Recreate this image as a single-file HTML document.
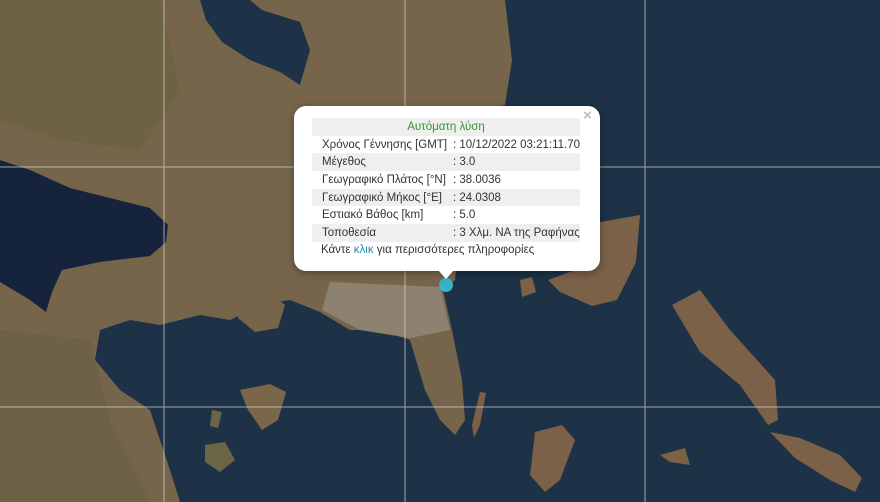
<!DOCTYPE html>
<html><head><meta charset="utf-8"><style>
html,body{margin:0;padding:0;width:880px;height:502px;overflow:hidden;background:#1d3246;font-family:"Liberation Sans",sans-serif}
svg{position:absolute;left:0;top:0}
.pop{position:absolute;left:294px;top:106px;width:306px;height:165px;background:#fff;border-radius:12px;box-shadow:0 2px 8px rgba(0,0,0,.35)}
.tip{position:absolute;left:438px;top:270px;width:0;height:0;border-left:8px solid transparent;border-right:8px solid transparent;border-top:9px solid #fff}
.x{position:absolute;left:583px;top:107px;color:#bbb;font-size:15px;font-weight:bold}
table{position:absolute;left:312px;top:118px;width:268px;border-collapse:collapse;font-size:11.5px;color:#333}
td{height:17.7px;padding:0 0 0 10px;white-space:nowrap}
td:first-child{width:132px}
tr.g td{background:#efefef}
td.v{padding-left:0}
.link{position:absolute;left:321px;top:244px;font-size:11.5px;color:#333}
.link span{color:#2a8fb8}
</style></head><body>
<svg width="880" height="502" viewBox="0 0 880 502">
<rect width="880" height="502" fill="#1d3246"/>
<path d="M0,0 L505,0 L512,60 L505,105 L472,112 L462,200 L455,280 L443,290 L452,330 L462,380 L465,420 L455,435 L440,420 L425,390 L410,340 L380,330 L350,330 L320,312 L290,300 L260,305 L230,320 L200,315 L160,325 L130,320 L100,330 L95,360 L120,390 L150,410 L160,440 L170,470 L180,502 L0,502 Z" fill="#76654a"/>
<path d="M0,0 L160,0 L180,90 L140,150 L60,140 L0,120 Z" fill="#67623f" opacity=".6"/>
<path d="M300,140 L420,150 L440,230 L380,260 L300,240 Z" fill="#6b6544" opacity=".5"/>
<path d="M330,282 L440,287 L450,330 L410,338 L360,330 L322,310 Z" fill="#8d8270"/>
<path d="M0,330 L90,340 L110,420 L150,502 L0,502 Z" fill="#676143" opacity=".6"/>
<path d="M200,0 L250,0 L262,10 L300,22 L310,50 L300,85 L280,72 L250,60 L222,42 L206,20 Z" fill="#1d3246"/>
<path d="M0,160 L30,170 L70,188 L110,198 L150,208 L168,225 L166,242 L150,256 L100,262 L62,270 L52,292 L46,312 L30,300 L0,282 Z" fill="#15243c"/>
<path d="M240,300 L268,292 L285,305 L278,328 L255,332 L238,318 Z" fill="#76654a"/>
<path d="M240,390 L270,384 L286,392 L278,420 L262,430 L248,410 Z" fill="#7a674a"/>
<path d="M205,445 L225,442 L235,460 L220,472 L205,462 Z" fill="#6a6545"/>
<path d="M212,410 L222,412 L218,428 L210,426 Z" fill="#6a6545"/>
<path d="M600,222 L640,215 L636,262 L617,300 L592,306 L560,292 L548,280 L575,270 L595,255 Z" fill="#7a6148"/>
<path d="M520,280 L532,277 L536,292 L522,297 Z" fill="#7a6148"/>
<path d="M672,305 L700,290 L730,330 L775,380 L778,420 L768,425 L740,385 L700,352 Z" fill="#7a6148"/>
<path d="M770,432 L800,438 L840,455 L862,478 L855,492 L830,480 L795,458 Z" fill="#7a6148"/>
<path d="M660,455 L685,448 L690,465 L670,462 Z" fill="#7a6148"/>
<path d="M480,392 L486,393 L480,425 L474,438 L472,425 Z" fill="#7a6148"/>
<path d="M535,432 L562,425 L575,440 L560,480 L545,492 L530,475 Z" fill="#7a6148"/>
<g stroke="#d8d8d8" stroke-width="1" opacity=".7">
<line x1="164" y1="0" x2="164" y2="502"/><line x1="405" y1="0" x2="405" y2="502"/><line x1="645" y1="0" x2="645" y2="502"/>
<line x1="0" y1="167" x2="880" y2="167"/><line x1="0" y1="407" x2="880" y2="407"/>
</g>
<circle cx="446" cy="285" r="7" fill="#35b3c8"/>
</svg>
<div class="pop"></div>
<div class="tip"></div>
<div class="x">×</div>
<table>
<tr class="g"><td colspan="2" style="text-align:center;color:#2e9a2e;padding:0">Αυτόματη λύση</td></tr>
<tr><td>Χρόνος Γέννησης [GMT]</td><td class="v">: 10/12/2022 03:21:11.70</td></tr>
<tr class="g"><td>Μέγεθος</td><td class="v">: 3.0</td></tr>
<tr><td>Γεωγραφικό Πλάτος [°N]</td><td class="v">: 38.0036</td></tr>
<tr class="g"><td>Γεωγραφικό Μήκος [°E]</td><td class="v">: 24.0308</td></tr>
<tr><td>Εστιακό Βάθος [km]</td><td class="v">: 5.0</td></tr>
<tr class="g"><td>Τοποθεσία</td><td class="v">: 3 Χλμ. ΝΑ της Ραφήνας</td></tr>
</table>
<div class="link">Κάντε <span>κλικ</span> για περισσότερες πληροφορίες</div>
</body></html>
